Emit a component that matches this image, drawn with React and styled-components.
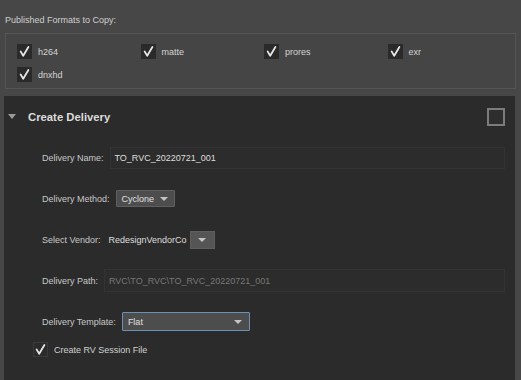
import React from "react";
import styled, { createGlobalStyle } from "styled-components";

const Global = createGlobalStyle`
  html, body { margin: 0; padding: 0; background: #474747; }
  body { font-family: "Liberation Sans", Arial, sans-serif; }
  * { box-sizing: border-box; }
`;

const Page = styled.div`
  width: 521px;
  height: 380px;
  overflow: hidden;
  background: #474747;
  display: flex;
  flex-direction: column;
`;

const SectionLabel = styled.div`
  font-size: 9px;
  line-height: 12px;
  color: #cfcfcf;
  padding: 14px 0 0 5px;
  height: 33px;
`;

const GroupBox = styled.div`
  margin: 0 5px;
  height: 56px;
  border: 1px solid #555555;
  background: #454545;
  padding: 10px 0 0 11px;
  display: grid;
  grid-template-columns: repeat(4, 123.5px);
  grid-auto-rows: 15px;
  row-gap: 8px;
`;

const CheckItem = styled.label`
  display: flex;
  align-items: center;
  gap: 6px;
  font-size: 9px;
  color: #d4d4d4;
`;

const Box = styled.span`
  width: ${(p) => p.$size || 15}px;
  height: ${(p) => p.$size || 15}px;
  background: ${(p) => p.$bg || "#2a2a2a"};
  border: ${(p) => p.$border || "none"};
  display: flex;
  align-items: center;
  justify-content: center;
  flex-shrink: 0;
`;

const Check = () => (
  <svg width="13" height="13" viewBox="0 0 13 13">
    <path d="M2.6 6.4 L5.2 10.8 L10.4 2" fill="none" stroke="#e6e6e6" strokeWidth="1.8" strokeLinecap="round" strokeLinejoin="round" />
  </svg>
);

const Panel = styled.div`
  margin: 7px 6px 0 4px;
  flex: 1;
  background: #2b2b2b;
  display: flex;
  flex-direction: column;
`;

const Header = styled.div`
  height: 41px;
  display: flex;
  align-items: center;
  padding: 0 10px 0 4px;
`;

const Caret = styled.span`
  width: 0;
  height: 0;
  border-left: 4px solid transparent;
  border-right: 4px solid transparent;
  border-top: 5px solid #9a9a9a;
  margin-right: 12px;
`;

const Title = styled.div`
  flex: 1;
  font-size: 11.3px;
  font-weight: bold;
  color: #dcdcdc;
`;

const HeaderBox = styled.span`
  width: 18px;
  height: 18px;
  border: 2px solid #7c7c7c;
  background: #2e2e2e;
`;

const Form = styled.div`
  display: flex;
  flex-direction: column;
  padding: 0 10px 0 38px;
`;

const Row = styled.div`
  height: 41px;
  display: flex;
  align-items: center;
  gap: ${(p) => p.$gap ?? 6}px;
`;

const Label = styled.span`
  font-size: 9px;
  color: #c8c8c8;
  white-space: nowrap;
`;

const TextField = styled.div`
  flex: 1;
  height: ${(p) => p.$h || 22}px;
  border: 1px solid #333333;
  background: #2c2c2c;
  display: flex;
  align-items: center;
  padding-left: 4px;
  font-size: 9px;
  color: ${(p) => (p.$disabled ? "#777777" : "#dedede")};
`;

const Combo = styled.div`
  width: ${(p) => p.$w}px;
  height: ${(p) => p.$h}px;
  background: #4d4d4d;
  border: 1px solid ${(p) => (p.$focus ? "#6b90b8" : "#5f5f5f")};
  border-radius: 1px;
  display: flex;
  align-items: center;
  padding: 0 ${(p) => p.$pr || 8}px 0 5px;
  font-size: 9px;
  color: #e0e0e0;
  gap: 6px;
`;

const ComboText = styled.span`
  flex: ${(p) => (p.$grow ? 1 : "none")};
`;

const Arrow = styled.span`
  width: 0;
  height: 0;
  border-left: 4px solid transparent;
  border-right: 4px solid transparent;
  border-top: 4px solid #c4c4c4;
`;

const VendorCombo = styled.div`
  display: flex;
  align-items: center;
  margin-left: -2px;
`;

const VendorText = styled.span`
  font-size: 9px;
  color: #dedede;
  padding-right: 3px;
`;

const VendorButton = styled.span`
  width: 25px;
  height: 18px;
  background: #555555;
  border: 1px solid #5e5e5e;
  display: flex;
  align-items: center;
  justify-content: center;
`;

const CheckRow = styled.label`
  height: 15px;
  display: flex;
  align-items: center;
  gap: 6px;
  margin-left: -9px;
  font-size: 9px;
  color: #d0d0d0;
`;

const formats = ["h264", "matte", "prores", "exr", "dnxhd"];

export default function App() {
  return (
    <Page>
      <Global />
      <SectionLabel>Published Formats to Copy:</SectionLabel>
      <GroupBox>
        {formats.map((f) => (
          <CheckItem key={f}>
            <Box>
              <Check />
            </Box>
            {f}
          </CheckItem>
        ))}
      </GroupBox>
      <Panel>
        <Header>
          <Caret />
          <Title>Create Delivery</Title>
          <HeaderBox />
        </Header>
        <Form>
          <Row>
            <Label>Delivery Name:</Label>
            <TextField>TO_RVC_20220721_001</TextField>
          </Row>
          <Row>
            <Label>Delivery Method:</Label>
            <Combo $w={59} $h={17}>
              <ComboText>Cyclone</ComboText>
              <Arrow />
            </Combo>
          </Row>
          <Row $gap={10}>
            <Label>Select Vendor:</Label>
            <VendorCombo>
              <VendorText>RedesignVendorCo</VendorText>
              <VendorButton>
                <Arrow />
              </VendorButton>
            </VendorCombo>
          </Row>
          <Row>
            <Label>Delivery Path:</Label>
            <TextField $h={23} $disabled>RVC\TO_RVC\TO_RVC_20220721_001</TextField>
          </Row>
          <Row>
            <Label>Delivery Template:</Label>
            <Combo $w={128} $h={19} $focus $pr={7}>
              <ComboText $grow>Flat</ComboText>
              <Arrow />
            </Combo>
          </Row>
          <CheckRow>
            <Box $bg="#2b2b2b" $border="1px solid #3a3a3a">
              <Check />
            </Box>
            Create RV Session File
          </CheckRow>
        </Form>
      </Panel>
    </Page>
  );
}
